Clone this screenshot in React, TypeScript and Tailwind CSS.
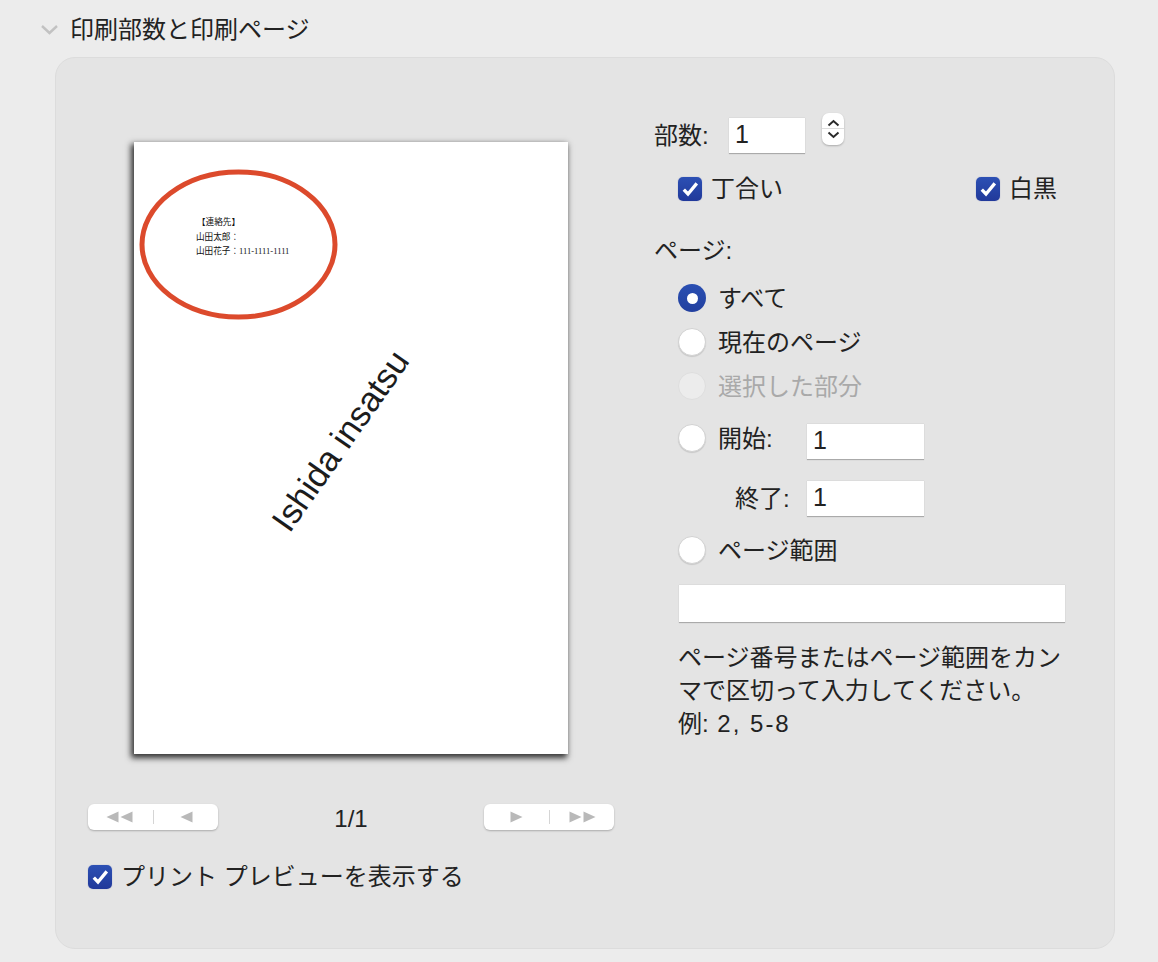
const FONT = "font-['Liberation_Sans','Noto_Sans_CJK_JP',sans-serif]";

function Checkbox({ label }: { label: string }) {
  return (
    <div className="flex items-center gap-[9px] h-[28px]">
      <div className="w-[24px] h-[24px] rounded-[5px] bg-gradient-to-b from-[#2c50b4] to-[#21399a] shadow-[0_0_1px_rgba(30,50,150,0.5)]">
        <svg width="24" height="24" viewBox="0 0 24 24" fill="none">
          <path d="M5.8 12.6 L10 17 L18.8 6.4" stroke="#fff" strokeWidth="3.3" />
        </svg>
      </div>
      <span>{label}</span>
    </div>
  );
}

function Radio({ label, selected, disabled }: { label: string; selected?: boolean; disabled?: boolean }) {
  return (
    <div className="flex items-center gap-[12px] h-[28px]">
      {selected ? (
        <div className="w-[28px] h-[28px] rounded-full bg-gradient-to-b from-[#2a4fb2] to-[#22409f] flex items-center justify-center">
          <div className="w-[11px] h-[11px] rounded-full bg-white" />
        </div>
      ) : (
        <div
          className={
            disabled
              ? "w-[28px] h-[28px] rounded-full bg-[#ececec] border border-[#dedede]"
              : "w-[28px] h-[28px] rounded-full bg-white border border-[#d2d2d2] shadow-[0_1px_1px_rgba(0,0,0,0.12)]"
          }
        />
      )}
      <span className={disabled ? "pt-[2px] text-[#a9a9a9]" : "pt-[2px]"}>{label}</span>
    </div>
  );
}

function NumField({ width = "w-[117px]" }: { width?: string }) {
  return (
    <div className={`${width} h-[36px] bg-white border-b border-[#aaaaaa] shadow-[0_0_1px_rgba(0,0,0,0.2)] pl-[6px] pb-[3px] flex items-center text-[25px]`}>
      1
    </div>
  );
}

function Triangle({ dir }: { dir: "left" | "right" }) {
  return (
    <svg width="13" height="12" viewBox="0 0 13 12">
      <path d={dir === "left" ? "M0.5 6 L12.5 0.5 V11.5 Z" : "M12.5 6 L0.5 0.5 V11.5 Z"} fill="#b9b9b9" />
    </svg>
  );
}

function PagerButton({ dir }: { dir: "left" | "right" }) {
  const double = (
    <div className="flex gap-[1px]">
      <Triangle dir={dir} />
      <Triangle dir={dir} />
    </div>
  );
  const single = <Triangle dir={dir} />;
  return (
    <div className="w-[130px] h-[26px] bg-white rounded-[6px] shadow-[0_1px_2px_rgba(0,0,0,0.25)] flex items-center">
      <div className={dir === "left" ? "w-[65px] flex justify-center pr-[2px]" : "w-[65px] flex justify-center"}>
        {dir === "left" ? double : single}
      </div>
      <div className="w-px h-[14px] bg-[#d5d5d5]" />
      <div className="flex-1 flex justify-center">{dir === "left" ? single : double}</div>
    </div>
  );
}

function PagePreview() {
  return (
    <div className="relative w-[434px] h-[612px] bg-white shadow-[-2px_3px_6px_1px_rgba(0,0,0,0.78)] overflow-hidden">
      <svg className="absolute left-0 top-0" width="434" height="612" viewBox="0 0 434 612">
        <ellipse cx="104.5" cy="102.5" rx="96.5" ry="72.5" fill="none" stroke="#dc4a2c" strokeWidth="5" />
      </svg>
      <div className="absolute left-[62px] top-[73px] text-[8.6px] leading-[14.5px] text-[#111] font-['Liberation_Serif','Noto_Sans_CJK_JP',serif]">
        <div className="pl-[1px]">【連絡先】</div>
        <div>山田太郎：</div>
        <div>山田花子：111-1111-1111</div>
      </div>
      <div className="absolute left-[101px] top-[281px] w-[210px] text-center text-[34.5px] leading-[36px] text-[#1c1c1c] whitespace-nowrap -rotate-[55deg]">
        Ishida insatsu
      </div>
    </div>
  );
}

export default function App() {
  return (
    <div className={`${FONT} w-[1158px] h-[962px] bg-[#ececec] text-[#222] text-[24px] leading-[28px] overflow-hidden`}>
      <div className="h-[57px] pl-[40px] pt-[2px] flex items-center gap-[11px]">
        <svg width="19" height="11" viewBox="0 0 19 11" fill="none">
          <path d="M2 2 L9.5 9 L17 2" stroke="#c2c2c2" strokeWidth="2.4" />
        </svg>
        <span>印刷部数と印刷ページ</span>
      </div>

      <div className="ml-[55px] w-[1060px] h-[892px] rounded-[20px] bg-[#e4e4e4] border border-[#dcdcdc] flex">
        <div className="w-[598px] pl-[32px] pt-[84px]">
          <div className="pl-[46px]">
            <PagePreview />
          </div>
          <div className="mt-[50px] w-[526px] h-[26px] flex items-center justify-between">
            <PagerButton dir="left" />
            <span className="pt-[4px]">1/1</span>
            <PagerButton dir="right" />
          </div>
          <div className="mt-[33px]">
            <Checkbox label="プリント プレビューを表示する" />
          </div>
        </div>

        <div className="pt-[60px] w-[445px]">
          <div className="flex items-start">
            <div className="flex items-center">
              <span className="w-[75px]">部数:</span>
              <NumField width="w-[76px]" />
            </div>
            <div className="ml-[17px] -mt-[5px] w-[22px] h-[32px] rounded-[7px] bg-white shadow-[0_1px_2px_rgba(0,0,0,0.25)] flex flex-col items-center">
              <div className="h-[15px] flex items-end pb-[1px]">
                <svg width="13" height="8" viewBox="0 0 13 8" fill="none">
                  <path d="M1.5 6.5 L6.5 2 L11.5 6.5" stroke="#2a2a2a" strokeWidth="2" />
                </svg>
              </div>
              <div className="w-full h-px bg-[#dddddd]" />
              <div className="h-[16px] flex items-start pt-[2px]">
                <svg width="13" height="8" viewBox="0 0 13 8" fill="none">
                  <path d="M1.5 1.5 L6.5 6 L11.5 1.5" stroke="#2a2a2a" strokeWidth="2" />
                </svg>
              </div>
            </div>
          </div>

          <div className="mt-[21px] pl-[24px] w-[403px] flex justify-between">
            <Checkbox label="丁合い" />
            <Checkbox label="白黒" />
          </div>

          <div className="mt-[34px]">ページ:</div>

          <div className="mt-[19px] pl-[24px] flex flex-col gap-[16px]">
            <Radio label="すべて" selected />
            <Radio label="現在のページ" />
            <Radio label="選択した部分" disabled />
          </div>

          <div className="mt-[24px] pl-[24px] flex items-start">
            <div className="w-[129px]">
              <Radio label="開始:" />
            </div>
            <NumField />
          </div>

          <div className="mt-[21px] pl-[24px] flex items-center">
            <span className="w-[129px] pl-[57px]">終了:</span>
            <NumField />
          </div>

          <div className="mt-[19px] pl-[24px]">
            <Radio label="ページ範囲" />
          </div>

          <div className="mt-[21px] ml-[25px] w-[386px] h-[38px] bg-white border-b border-[#aaaaaa] shadow-[0_0_1px_rgba(0,0,0,0.2)]" />

          <p className="mt-[18px] ml-[24px] w-[392px] leading-[33px]">
            ページ番号またはページ範囲をカンマで区切って入力してください。
            <br />
            例: <span className="ml-[2px] tracking-[2px]">2, 5-8</span>
          </p>
        </div>
      </div>
    </div>
  );
}
